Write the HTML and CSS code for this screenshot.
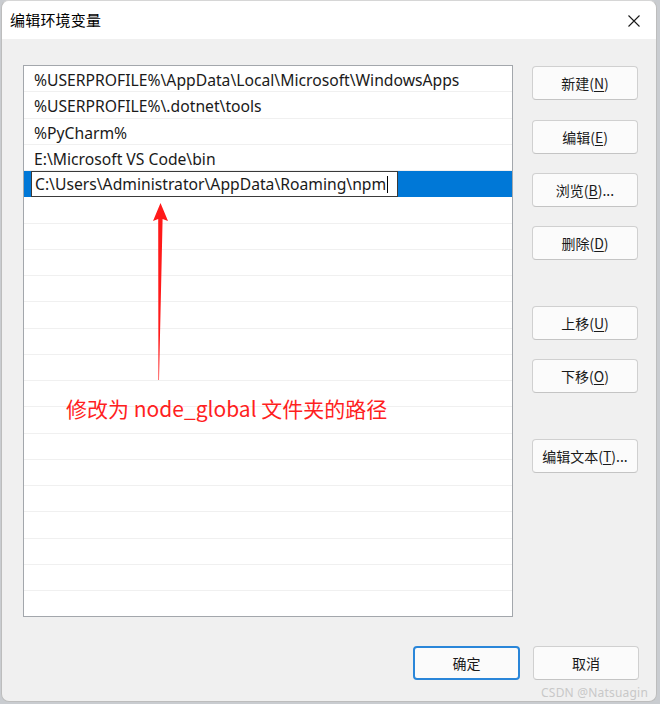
FILE: index.html
```html
<!DOCTYPE html>
<html lang="zh-CN">
<head>
<meta charset="utf-8">
<title>编辑环境变量</title>
<link rel="stylesheet" href="styles.css">
</head>
<body>
<div class="window">
  <div class="titlebar">
    <span class="title">编辑环境变量</span>
    <svg class="close" width="12" height="12" viewBox="0 0 12 12"><path d="M0.5 0.5 L11.5 11.5 M11.5 0.5 L0.5 11.5" stroke="#1a1a1a" stroke-width="1.1" fill="none"/></svg>
  </div>
  <div class="content">
    <div class="main">
      <div class="list">
        <div class="row">%USERPROFILE%\AppData\Local\Microsoft\WindowsApps</div>
        <div class="row">%USERPROFILE%\.dotnet\tools</div>
        <div class="row">%PyCharm%</div>
        <div class="row">E:\Microsoft VS Code\bin</div>
        <div class="row selected"><div class="editbox">C:\Users\Administrator\AppData\Roaming\npm<span class="caret"></span></div></div>
        <div class="row"></div><div class="row"></div><div class="row"></div><div class="row"></div>
        <div class="row"></div><div class="row"></div><div class="row"></div><div class="row"></div>
        <div class="row"></div><div class="row"></div><div class="row"></div><div class="row"></div>
        <div class="row"></div><div class="row"></div><div class="row"></div><div class="row last"></div>
        <svg class="arrow" width="30" height="190" viewBox="0 0 30 190">
          <path d="M15.5 0 L23 18 L17.6 16 L14 177 L13.4 177 L13.2 16 L8 18 Z" fill="#ff1a1a"/>
        </svg>
        <div class="note">修改为 node_global 文件夹的路径</div>
      </div>
      <div class="side">
        <button class="btn">新建(<u>N</u>)</button>
        <button class="btn g20">编辑(<u>E</u>)</button>
        <button class="btn g19">浏览(<u>B</u>)...</button>
        <button class="btn g19">删除(<u>D</u>)</button>
        <button class="btn g46">上移(<u>U</u>)</button>
        <button class="btn g19">下移(<u>O</u>)</button>
        <button class="btn g46">编辑文本(<u>T</u>)...</button>
      </div>
    </div>
    <div class="footer">
      <button class="btn primary">确定</button>
      <button class="btn">取消</button>
    </div>
  </div>
</div>
<div class="watermark">CSDN @Natsuagin</div>
</body>
</html>
```

FILE: styles.css
```css
html, body {
  margin: 0;
  padding: 0;
}
body {
  width: 660px;
  height: 704px;
  background: #c9ccd0;
  font-family: "Noto Sans", "Noto Sans CJK SC", sans-serif;
  color: #1a1a1a;
  overflow: hidden;
  position: relative;
}
.window {
  margin-left: 1px;
  width: 654px;
  height: 700px;
  border: 1px solid #bdbdbd;
  border-top-color: #d6d6d6;
  border-radius: 8px;
  background: #f0f0f0;
  overflow: hidden;
  display: flex;
  flex-direction: column;
}
.titlebar {
  height: 38px;
  background: #ffffff;
  display: flex;
  align-items: center;
  justify-content: space-between;
  padding: 0 16px 0 8px;
  flex: none;
}
.title {
  font-family: "Noto Sans CJK SC", sans-serif;
  font-size: 15px;
  color: #000;
  letter-spacing: 0.2px;
  margin-top: -1px;
}
.close {
  margin-top: 1px;
}
.content {
  padding: 26px 17px 0 21px;
  display: flex;
  flex-direction: column;
}
.main {
  display: flex;
  gap: 19px;
}
.list {
  position: relative;
  width: 488px;
  height: 550px;
  border: 1px solid #a3a7ac;
  background: #ffffff;
  overflow: hidden;
}
.row {
  height: 26.25px;
  box-sizing: border-box;
  border-bottom: 1px solid #f0f0f0;
  font-size: 15.7px;
  line-height: 24px;
  padding-top: 2px;
  padding-left: 10px;
  white-space: nowrap;
  color: #1a1a1a;
}
.row.selected {
  background: #0078d7;
  border-bottom-color: #0078d7;
  padding-left: 7px;
  padding-top: 1px;
}
.editbox {
  height: 24px;
  border: 1px solid #3a3a3a;
  background: #fff;
  line-height: 24px;
  padding-left: 3px;
  box-sizing: content-box;
  font-size: 15.7px;
  color: #1a1a1a;
  margin-top: -1px;
  width: 362px;
  display: flex;
  align-items: center;
}
.caret {
  display: inline-block;
  width: 1px;
  height: 17px;
  background: #000;
  margin-left: 1px;
}
.arrow {
  position: absolute;
  left: 121px;
  top: 137px;
}
.note {
  position: absolute;
  left: 42px;
  top: 327px;
  font-family: "Noto Sans CJK SC", sans-serif;
  font-size: 21px;
  color: #ff1f1f;
  white-space: nowrap;
}
.side {
  display: flex;
  flex-direction: column;
  padding-top: 1px;
}
.btn {
  width: 106px;
  height: 34px;
  box-sizing: border-box;
  border: 1px solid #d0d0d0;
  border-bottom-color: #c4c4c4;
  border-radius: 4px;
  background: #fbfbfb;
  font-family: "Noto Sans CJK SC", "Noto Sans", sans-serif;
  font-size: 14px;
  color: #1a1a1a;
  padding: 0;
  line-height: 32px;
}
.btn u {
  text-underline-offset: 2px;
}
.g20 { margin-top: 20px; }
.g19 { margin-top: 19px; }
.g46 { margin-top: 46px; }
.footer {
  display: flex;
  justify-content: flex-end;
  gap: 13px;
  margin-top: 29px;
}
.btn.primary {
  border: 2px solid #2a86d9;
  width: 107px;
  line-height: 30px;
}
.watermark {
  position: absolute;
  right: 12px;
  bottom: 3px;
  font-family: "Noto Sans", sans-serif;
  font-size: 12px;
  color: #c8c8c8;
  letter-spacing: 0.2px;
}
```
